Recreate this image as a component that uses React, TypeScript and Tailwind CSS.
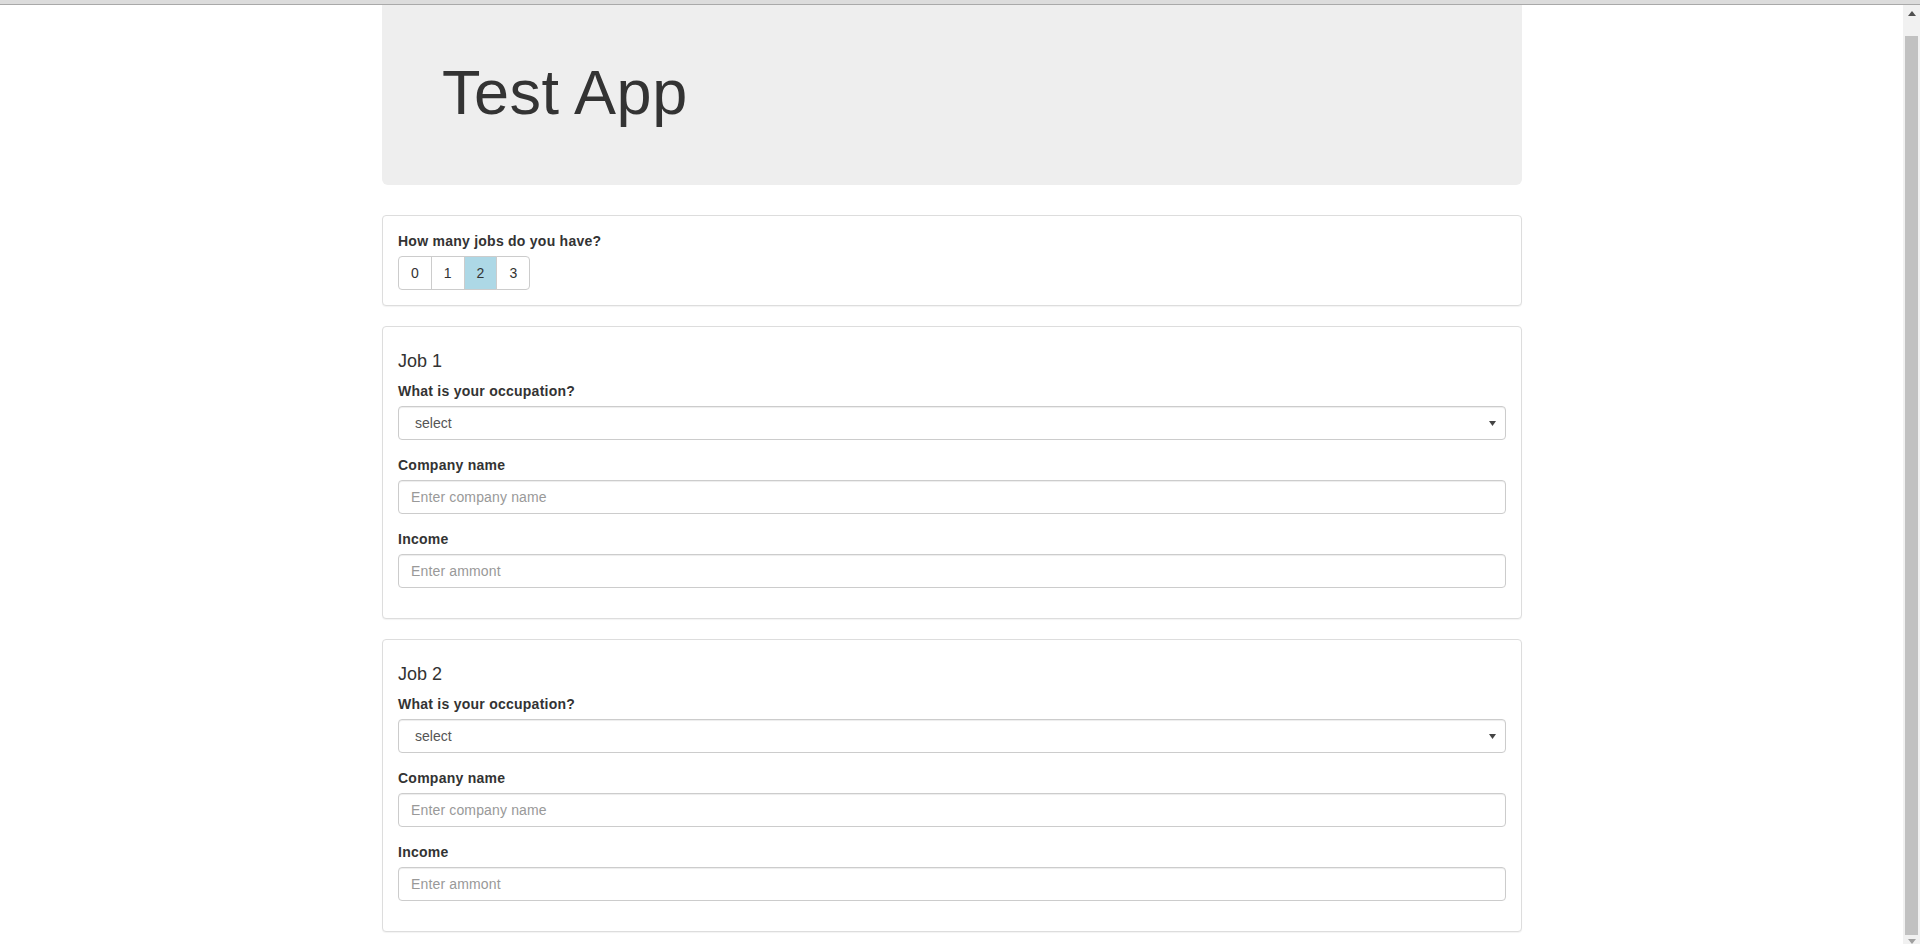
import React from "react";

function Field({ label, placeholder }: { label: string; placeholder: string }) {
  return (
    <div className="mb-[15px]">
      <label className="block font-bold mb-[5px] leading-[20px] tracking-[0.25px]">{label}</label>
      <input
        readOnly
        placeholder={placeholder}
        className="block w-full h-[34px] px-[12px] py-[6px] border border-[#cccccc] rounded-[4px] bg-white text-[#555555] text-[14px] leading-[20px] tracking-[0.15px] placeholder:text-[#999999] shadow-[inset_0_1px_1px_rgba(0,0,0,0.075)] outline-none"
      />
    </div>
  );
}

function SelectField({ label }: { label: string }) {
  return (
    <div className="mb-[15px]">
      <label className="block font-bold mb-[5px] leading-[20px] tracking-[0.25px]">{label}</label>
      <div className="flex items-center justify-between w-full h-[34px] pl-[16px] pr-[9px] border border-[#cccccc] rounded-[4px] bg-white text-[#555555] shadow-[inset_0_1px_1px_rgba(0,0,0,0.075)]">
        <span>select</span>
        <svg width="7" height="5" viewBox="0 0 7 5">
          <polygon points="0,0 7,0 3.5,5" fill="#444444" />
        </svg>
      </div>
    </div>
  );
}

function JobPanel({ n }: { n: number }) {
  return (
    <div className="border border-[#dddddd] rounded-[4px] p-[15px] mb-[20px] bg-white shadow-[0_1px_1px_rgba(0,0,0,0.05)]">
      <h4 className="text-[18px] leading-[19px] font-normal mt-[10px] mb-[10px]">Job {n}</h4>
      <SelectField label="What is your occupation?" />
      <Field label="Company name" placeholder="Enter company name" />
      <Field label="Income" placeholder="Enter ammont" />
    </div>
  );
}

export default function App() {
  const options = ["0", "1", "2", "3"];
  return (
    <div className="w-[1920px] h-[944px] overflow-hidden flex flex-col bg-white text-[#333333] text-[14px] leading-[20px] font-['Liberation_Sans',Arial,Helvetica,sans-serif]">
      <div className="h-[4px] bg-[#dcdcdc] shrink-0" />
      <div className="h-px bg-[#a9a9a9] shrink-0" />
      <div className="flex flex-1 min-h-0">
        <div className="flex-1 min-w-0 overflow-hidden">
          <div className="ml-[382px] w-[1140px]">
            <div className="h-[180px] bg-[#eeeeee] rounded-b-[6px] pt-[53px] px-[60px]">
              <h1 className="text-[63px] leading-[69px] font-normal tracking-[0.5px]">Test App</h1>
            </div>
            <div className="mt-[30px]">
              <div className="border border-[#dddddd] rounded-[4px] p-[15px] mb-[20px] bg-white shadow-[0_1px_1px_rgba(0,0,0,0.05)]">
                <label className="block font-bold mb-[5px] leading-[20px] tracking-[0.25px]">How many jobs do you have?</label>
                <div className="flex">
                  {options.map((o, i) => (
                    <button
                      key={o}
                      className={
                        "h-[34px] px-[12px] border border-[#cccccc] text-[#333333] leading-[20px] " +
                        (i === 0 ? "rounded-l-[4px] " : "-ml-px ") +
                        (i === options.length - 1 ? "rounded-r-[4px] " : "") +
                        (o === "2" ? "bg-[#add8e6]" : "bg-white")
                      }
                    >
                      {o}
                    </button>
                  ))}
                </div>
              </div>
              <JobPanel n={1} />
              <JobPanel n={2} />
            </div>
          </div>
        </div>
        <div className="w-[17px] shrink-0 bg-[#f1f1f1] flex flex-col">
          <div className="h-[17px] flex items-center justify-center shrink-0">
            <svg width="8" height="5" viewBox="0 0 8 5">
              <polygon points="0,5 8,5 4,0" fill="#505050" />
            </svg>
          </div>
          <div className="h-[14px] shrink-0" />
          <div className="h-[899px] mx-[2px] bg-[#c1c1c1] shrink-0" />
          <div className="h-[17px] flex items-start justify-center pt-[4px] shrink-0">
            <svg width="8" height="5" viewBox="0 0 8 5">
              <polygon points="0,0 8,0 4,5" fill="#a0a0a0" />
            </svg>
          </div>
        </div>
      </div>
    </div>
  );
}
